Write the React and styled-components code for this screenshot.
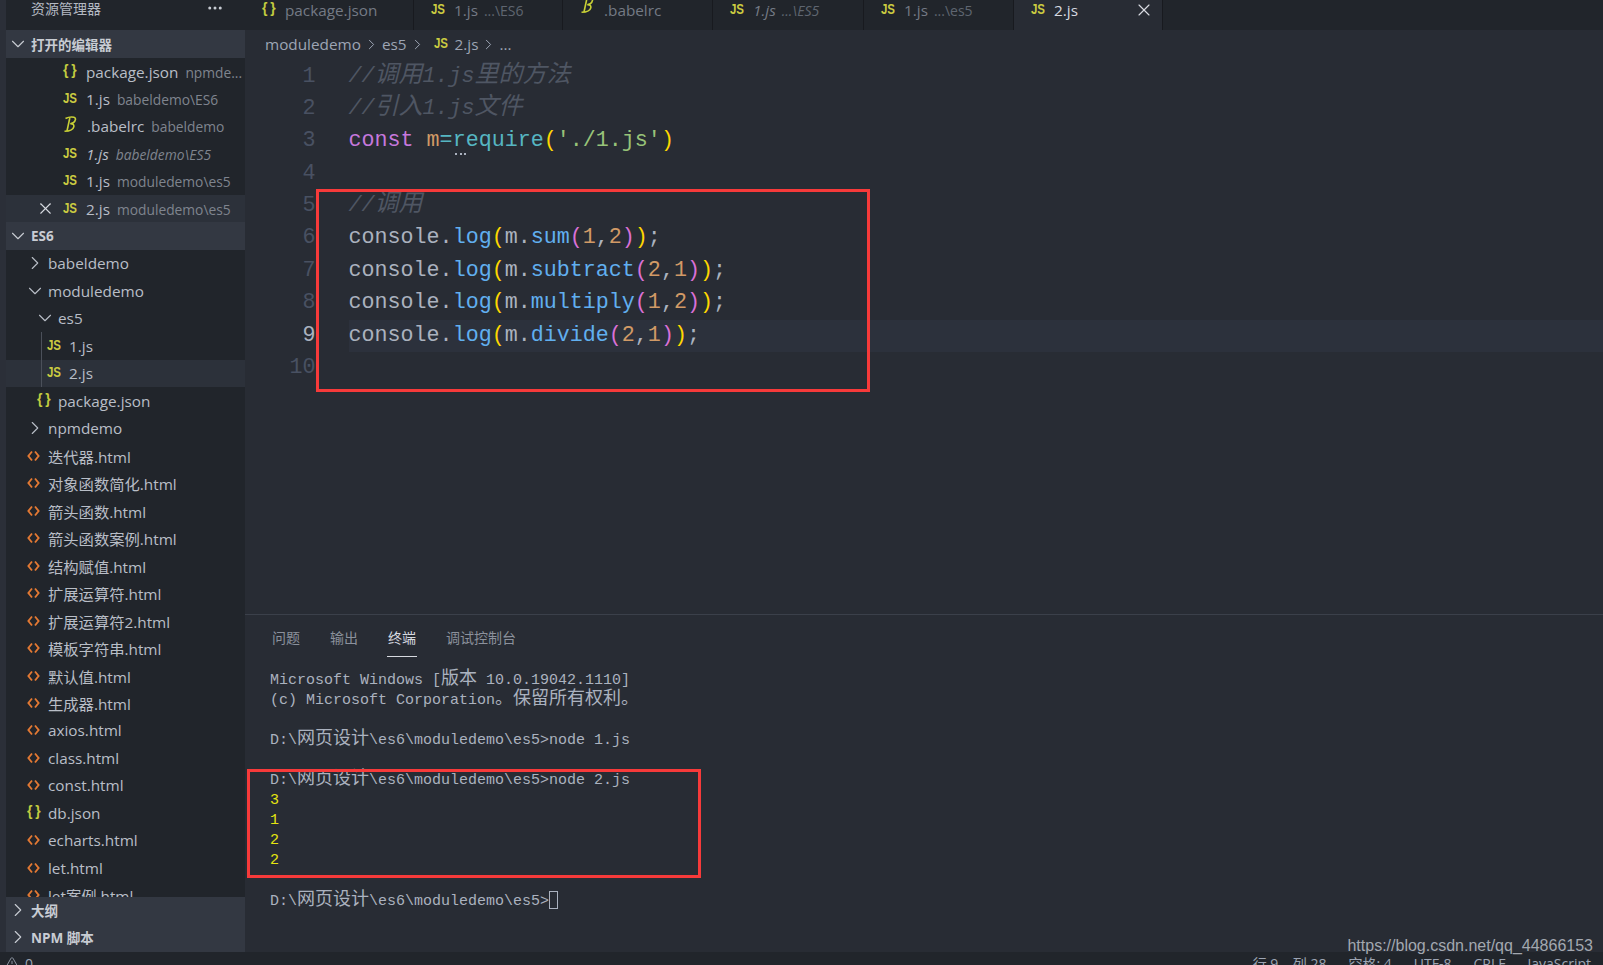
import React from "react";
import styled, { createGlobalStyle } from "styled-components";
import { ChevronRight, ChevronDown, X, Ellipsis, TriangleAlert } from "lucide-react";

const UI_FONT = `"Open Sans", "Noto Sans CJK SC", sans-serif`;
const MONO_FONT = `"Liberation Mono", "Noto Sans CJK SC", monospace`;

const GlobalStyle = createGlobalStyle`
  html, body {
    margin: 0;
    padding: 0;
    background: #282c34;
    overflow: hidden;
  }
  * {
    box-sizing: border-box;
  }
`;

const Page = styled.div`
  width: 1603px;
  height: 965px;
  position: relative;
  display: flex;
  flex-direction: column;
  overflow: hidden;
  background: #282c34;
  font-family: ${UI_FONT};
`;

const Main = styled.div`
  flex: 1;
  display: flex;
  min-height: 0;
`;

const Strip = styled.div`
  width: 6px;
  background: #2b2f38;
`;

/* sidebar */
const Sidebar = styled.aside`
  width: 239px;
  display: flex;
  flex-direction: column;
  background: #21252b;
`;

const SidebarTitle = styled.div`
  height: 30px;
  flex: none;
  display: flex;
  align-items: flex-start;
  justify-content: space-between;
  padding: 0 21px 0 25px;
  font-size: 14px;
  line-height: 18px;
  color: #b4b9c2;
  svg {
    margin-top: -1px;
  }
`;

const SectionHeader = styled.div`
  height: ${(p) => p.$height || 27.4}px;
  flex: none;
  display: flex;
  align-items: center;
  gap: 2px;
  padding: 0 0 ${(p) => p.$lift || 0}px 1px;
  background: #333842;
  color: #c8ccd3;
  font-size: 13.5px;
  font-weight: 700;
`;

const Tree = styled.div`
  flex: 1;
  min-height: 0;
  overflow: hidden;
`;

const Row = styled.div`
  height: ${(p) => p.$height || 27.47}px;
  display: flex;
  align-items: center;
  gap: ${(p) => p.$gap || 8}px;
  padding-left: ${(p) => p.$pad}px;
  background: ${(p) => (p.$selected ? "#2c313a" : "transparent")};
  color: #b9bec7;
  font-size: 15.3px;
  white-space: nowrap;
  overflow: hidden;
  position: relative;
  svg {
    flex: none;
  }
`;

const Guided = styled.div`
  position: relative;
  &::before {
    content: "";
    position: absolute;
    z-index: 1;
    left: 35px;
    top: 0;
    bottom: 0;
    width: 1px;
    background: #4b505a;
  }
`;

const CloseSlot = styled.span`
  position: absolute;
  left: 30px;
  top: 4px;
  display: flex;
  color: #d7dae0;
`;

const Name = styled.span`
  color: ${(p) => p.$color || "inherit"};
  font-style: ${(p) => (p.$italic ? "italic" : "normal")};
`;

const Desc = styled.span`
  margin-left: ${(p) => p.$gap || 7}px;
  color: #7f848e;
  font-size: 13.8px;
  font-style: ${(p) => (p.$italic ? "italic" : "normal")};
`;

/* file icons */
const JsGlyph = styled.span`
  display: inline-block;
  width: 13px;
  flex: none;
  color: #cbcb41;
  font-family: "Liberation Sans", sans-serif;
  font-size: 14px;
  font-weight: 700;
  line-height: 12px;
  letter-spacing: -0.2px;
  transform: translateY(-1.5px) scaleX(0.82);
  transform-origin: left center;
`;

const BraceGlyph = styled.span`
  display: inline-block;
  width: 13px;
  flex: none;
  color: #c2cb3f;
  font-family: "Liberation Sans", sans-serif;
  font-size: 14px;
  font-weight: 700;
  line-height: 12px;
  letter-spacing: -0.5px;
  white-space: pre;
  transform: translateY(-2px);
`;

function BabelGlyph() {
  return (
    <svg width="14" height="17" viewBox="0 0 14 17" fill="none" stroke="#c9d136" strokeWidth="1.6" style={{ marginTop: -3 }}>
      <path d="M2.5 2.5C5 1.2 9 .8 11 1.2c2.200.5 2 3.600-.8 5.600-1 .6-2 .9-3 1 2.600-.2 4 .9 3.600 3-.5 2.400-4 4.200-9.300 4.500" />
      <path d="M6.800 2 4 15" />
    </svg>
  );
}

function HtmlGlyph() {
  return (
    <svg width="13" height="12" viewBox="0 0 13 12" fill="none" stroke="#e37933" strokeWidth="1.9">
      <path d="M5 1.500 1.400 6 5 10.500M8 1.500 11.600 6 8 10.500" />
    </svg>
  );
}

function FileIcon({ kind }) {
  if (kind === "js") return <JsGlyph>JS</JsGlyph>;
  if (kind === "json") return <BraceGlyph>{"{ }"}</BraceGlyph>;
  if (kind === "babel") return <BabelGlyph />;
  return <HtmlGlyph />;
}

/* tabs */
const Content = styled.div`
  flex: 1;
  min-width: 0;
  display: flex;
  flex-direction: column;
`;

const TabBar = styled.div`
  height: 30px;
  flex: none;
  display: flex;
  background: #21252b;
`;

const Tab = styled.div`
  width: ${(p) => p.$width}px;
  flex: none;
  display: flex;
  align-items: flex-start;
  gap: 10px;
  padding: 0 0 0 ${(p) => p.$pad || 17}px;
  position: relative;
  background: ${(p) => (p.$active ? "#282c34" : "#21252b")};
  border-right: 1px solid #181a1f;
  color: ${(p) => (p.$active ? "#d7dae0" : "#747a85")};
  font-size: 15.3px;
  line-height: 20px;
  white-space: nowrap;
  overflow: hidden;
  & > span:first-child {
    margin-top: 4px;
  }
`;

const TabClose = styled.span`
  position: absolute;
  right: 8px;
  top: 0;
  display: flex;
  color: #d7dae0;
`;

const TabDesc = styled.span`
  margin-left: 6px;
  color: #5f6570;
  font-size: 14px;
  font-style: ${(p) => (p.$italic ? "italic" : "normal")};
`;

/* breadcrumbs */
const Crumbs = styled.div`
  height: 28px;
  flex: none;
  display: flex;
  align-items: center;
  gap: 2px;
  padding-left: 20px;
  color: #9da5b4;
  font-size: 15.3px;
  span.icon {
    margin: 0 6px 0 6px;
    display: flex;
  }
`;

/* editor */
const Editor = styled.div`
  height: 556px;
  flex: none;
  padding-top: 2.5px;
  overflow: hidden;
`;

const CodeLine = styled.div`
  height: 32.4px;
  display: flex;
  font-family: ${MONO_FONT};
  font-size: 21.7px;
  line-height: 32.4px;
  white-space: pre;
`;

const LineNo = styled.span`
  width: 70.5px;
  flex: none;
  text-align: right;
  color: ${(p) => (p.$active ? "#abb2bf" : "#495162")};
`;

const LineText = styled.span`
  flex: 1;
  margin-left: 33px;
  background: ${(p) => (p.$active ? "#2c313c" : "transparent")};
  color: #abb2bf;
`;

const Tok = styled.span`
  color: ${(p) => p.$c};
`;

const Comment = styled.span`
  color: #4f5663;
  font-style: italic;
`;

const CommentCjk = styled.span`
  font-size: 24px;
  line-height: 0;
`;

const Hinted = styled.span`
  position: relative;
  color: #56b6c2;
  &::after {
    content: "";
    position: absolute;
    left: 2px;
    bottom: -2px;
    width: 11px;
    border-bottom: 2px dotted #abb2bf;
  }
`;

/* panel */
const Panel = styled.section`
  flex: 1;
  min-height: 0;
  border-top: 1px solid #3b404a;
  overflow: hidden;
`;

const PanelTabs = styled.div`
  height: 42px;
  display: flex;
  gap: 30px;
  padding-left: 27px;
`;

const PanelTab = styled.div`
  height: 42px;
  padding: 13px 0 0;
  margin: 0 ${(p) => (p.$active ? "-1px" : "0")};
  font-size: 14px;
  line-height: 20px;
  padding-left: ${(p) => (p.$active ? "1px" : "0")};
  padding-right: ${(p) => (p.$active ? "1px" : "0")};
  color: ${(p) => (p.$active ? "#d7dae0" : "#8b919c")};
  border-bottom: ${(p) => (p.$active ? "1px solid #d7dae0" : "1px solid transparent")};
`;

const Terminal = styled.div`
  padding: 14px 0 0 25px;
  font-family: ${MONO_FONT};
  font-size: 15px;
  color: #abb2bf;
`;

const TermLine = styled.div`
  height: 20px;
  line-height: 20px;
  white-space: pre;
  color: ${(p) => (p.$output ? "#e5e510" : "inherit")};
`;

const TermCjk = styled.span`
  font-size: 18px;
  line-height: 0;
`;

const Cursor = styled.span`
  display: inline-block;
  width: 9px;
  height: 18px;
  border: 1px solid #abb2bf;
  vertical-align: -4px;
`;

/* status bar */
const StatusBar = styled.footer`
  height: 13px;
  flex: none;
  display: flex;
  justify-content: space-between;
  padding: 2px 12px 0 5px;
  background: #21252b;
  color: #9da5b4;
  font-size: 14px;
  line-height: 20px;
  overflow: hidden;
`;

const StatusGroup = styled.div`
  display: flex;
  gap: ${(p) => p.$gap || 6}px;
  white-space: pre;
  svg {
    margin-top: 2px;
  }
`;

/* overlays */
const RedBox = styled.div`
  position: absolute;
  left: ${(p) => p.$x}px;
  top: ${(p) => p.$y}px;
  width: ${(p) => p.$w}px;
  height: ${(p) => p.$h}px;
  border: 3px solid #f73a3a;
  pointer-events: none;
`;

const Watermark = styled.div`
  position: absolute;
  right: 10px;
  top: 936px;
  font-family: "Liberation Sans", sans-serif;
  font-size: 16px;
  line-height: 20px;
  color: #a3a8b0;
`;

const openEditors = [
  { kind: "json", name: "package.json", desc: "npmde..." },
  { kind: "js", name: "1.js", desc: "babeldemo\\ES6" },
  { kind: "babel", name: ".babelrc", desc: "babeldemo" },
  { kind: "js", name: "1.js", desc: "babeldemo\\ES5", italic: true },
  { kind: "js", name: "1.js", desc: "moduledemo\\es5" },
  { kind: "js", name: "2.js", desc: "moduledemo\\es5", selected: true },
];

const htmlFiles = [
  "迭代器.html",
  "对象函数简化.html",
  "箭头函数.html",
  "箭头函数案例.html",
  "结构赋值.html",
  "扩展运算符.html",
  "扩展运算符2.html",
  "模板字符串.html",
  "默认值.html",
  "生成器.html",
  "axios.html",
  "class.html",
  "const.html",
];

const tabs = [
  { kind: "json", name: "package.json", width: 169, pad: 17 },
  { kind: "js", name: "1.js", desc: "...\\ES6", width: 149 },
  { kind: "babel", name: ".babelrc", width: 150 },
  { kind: "js", name: "1.js", desc: "...\\ES5", width: 151, italic: true },
  { kind: "js", name: "1.js", desc: "...\\es5", width: 150 },
  { kind: "js", name: "2.js", width: 149, active: true },
];

const BLUE = "#61afef";
const GOLD = "#ffd700";
const PINK = "#da70d6";
const NUM = "#d19a66";

function LogCall({ method, a, b }) {
  return (
    <>
      console.<Tok $c={BLUE}>log</Tok>
      <Tok $c={GOLD}>(</Tok>m.<Tok $c={BLUE}>{method}</Tok>
      <Tok $c={PINK}>(</Tok>
      <Tok $c={NUM}>{a}</Tok>,<Tok $c={NUM}>{b}</Tok>
      <Tok $c={PINK}>)</Tok>
      <Tok $c={GOLD}>)</Tok>;
    </>
  );
}

function Prompt({ children }) {
  return (
    <TermLine>
      D:\<TermCjk>网页设计</TermCjk>\es6\moduledemo\es5&gt;{children}
    </TermLine>
  );
}

const codeLines = [
  <Comment>
    //<CommentCjk>调用</CommentCjk>1.js<CommentCjk>里的方法</CommentCjk>
  </Comment>,
  <Comment>
    //<CommentCjk>引入</CommentCjk>1.js<CommentCjk>文件</CommentCjk>
  </Comment>,
  <>
    <Tok $c="#c678dd">const</Tok> <Tok $c={NUM}>m</Tok>
    <Tok $c="#56b6c2">=</Tok>
    <Hinted>require</Hinted>
    <Tok $c={GOLD}>(</Tok>
    <Tok $c="#98c379">'./1.js'</Tok>
    <Tok $c={GOLD}>)</Tok>
  </>,
  "",
  <Comment>
    //<CommentCjk>调用</CommentCjk>
  </Comment>,
  <LogCall method="sum" a="1" b="2" />,
  <LogCall method="subtract" a="2" b="1" />,
  <LogCall method="multiply" a="1" b="2" />,
  <LogCall method="divide" a="2" b="1" />,
  "",
];

const Fold = ({ open }) =>
  open ? <ChevronDown size={22} strokeWidth={1.2} /> : <ChevronRight size={22} strokeWidth={1.2} />;

export default function App() {
  return (
    <Page>
      <GlobalStyle />
      <Main>
        <Strip />
        <Sidebar>
          <SidebarTitle>
            资源管理器
            <Ellipsis size={18} strokeWidth={2} color="#c8ccd3" />
          </SidebarTitle>
          <SectionHeader $height={28}>
            <Fold open />
            打开的编辑器
          </SectionHeader>
          {openEditors.map((f, i) => (
            <Row key={i} $pad={57} $gap={10} $height={27.4} $selected={f.selected}>
              {f.selected && (
                <CloseSlot>
                  <X size={19} strokeWidth={1.4} />
                </CloseSlot>
              )}
              <FileIcon kind={f.kind} />
              <span>
                <Name $italic={f.italic}>{f.name}</Name>
                <Desc $italic={f.italic}>{f.desc}</Desc>
              </span>
            </Row>
          ))}
          <SectionHeader>
            <Fold open />
            ES6
          </SectionHeader>
          <Tree>
            <Row $pad={18} $gap={2}>
              <Fold />
              babeldemo
            </Row>
            <Row $pad={18} $gap={2}>
              <Fold open />
              moduledemo
            </Row>
            <Row $pad={28} $gap={2}>
              <Fold open />
              es5
            </Row>
            <Guided>
              <Row $pad={41} $gap={9}>
                <FileIcon kind="js" />
                1.js
              </Row>
              <Row $pad={41} $gap={9} $selected>
                <FileIcon kind="js" />
                2.js
              </Row>
            </Guided>
            <Row $pad={31} $gap={8}>
              <FileIcon kind="json" />
              package.json
            </Row>
            <Row $pad={18} $gap={2}>
              <Fold />
              npmdemo
            </Row>
            {htmlFiles.map((name) => (
              <Row key={name} $pad={21} $gap={8}>
                <FileIcon kind="html" />
                {name}
              </Row>
            ))}
            <Row $pad={21} $gap={8}>
              <FileIcon kind="json" />
              db.json
            </Row>
            <Row $pad={21} $gap={8}>
              <FileIcon kind="html" />
              echarts.html
            </Row>
            <Row $pad={21} $gap={8}>
              <FileIcon kind="html" />
              let.html
            </Row>
            <Row $pad={21} $gap={8}>
              <FileIcon kind="html" />
              let案例.html
            </Row>
          </Tree>
          <SectionHeader $lift={2}>
            <Fold />
            大纲
          </SectionHeader>
          <SectionHeader $lift={2}>
            <Fold />
            NPM 脚本
          </SectionHeader>
        </Sidebar>
        <Content>
          <TabBar>
            {tabs.map((t, i) => (
              <Tab key={i} $width={t.width} $pad={t.pad} $active={t.active}>
                <FileIcon kind={t.kind} />
                <span>
                  <Name $italic={t.italic}>{t.name}</Name>
                  {t.desc && <TabDesc $italic={t.italic}>{t.desc}</TabDesc>}
                </span>
                {t.active && (
                  <TabClose>
                    <X size={20} strokeWidth={1.4} />
                  </TabClose>
                )}
              </Tab>
            ))}
          </TabBar>
          <Crumbs>
            moduledemo
            <ChevronRight size={17} strokeWidth={1.4} />
            es5
            <ChevronRight size={17} strokeWidth={1.4} />
            <span className="icon">
              <FileIcon kind="js" />
            </span>
            2.js
            <ChevronRight size={17} strokeWidth={1.4} />
            ...
          </Crumbs>
          <Editor>
            {codeLines.map((line, i) => (
              <CodeLine key={i}>
                <LineNo $active={i === 8}>{i + 1}</LineNo>
                <LineText $active={i === 8}>{line}</LineText>
              </CodeLine>
            ))}
          </Editor>
          <Panel>
            <PanelTabs>
              <PanelTab>问题</PanelTab>
              <PanelTab>输出</PanelTab>
              <PanelTab $active>终端</PanelTab>
              <PanelTab>调试控制台</PanelTab>
            </PanelTabs>
            <Terminal>
              <TermLine>
                Microsoft Windows [<TermCjk>版本</TermCjk> 10.0.19042.1110]
              </TermLine>
              <TermLine>
                (c) Microsoft Corporation<TermCjk>。保留所有权利。</TermCjk>
              </TermLine>
              <TermLine />
              <Prompt>node 1.js</Prompt>
              <TermLine />
              <Prompt>node 2.js</Prompt>
              <TermLine $output>3</TermLine>
              <TermLine $output>1</TermLine>
              <TermLine $output>2</TermLine>
              <TermLine $output>2</TermLine>
              <TermLine />
              <Prompt>
                <Cursor />
              </Prompt>
            </Terminal>
          </Panel>
        </Content>
      </Main>
      <StatusBar>
        <StatusGroup>
          <TriangleAlert size={14} strokeWidth={1.5} />0
        </StatusGroup>
        <StatusGroup $gap={22}>
          <span>行 9,   列 28</span>
          <span>空格: 4</span>
          <span>UTF-8</span>
          <span>CRLF</span>
          <span>JavaScript</span>
        </StatusGroup>
      </StatusBar>
      <RedBox $x={316} $y={189} $w={554} $h={203} />
      <RedBox $x={247} $y={769} $w={454} $h={109} />
      <Watermark>https://blog.csdn.net/qq_44866153</Watermark>
    </Page>
  );
}
